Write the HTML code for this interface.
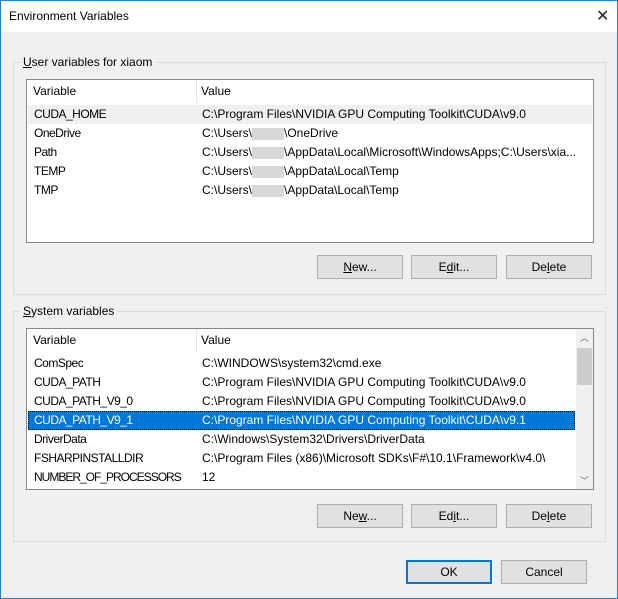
<!DOCTYPE html>
<html><head><style>
*{margin:0;padding:0;box-sizing:border-box}
body{width:618px;height:599px;overflow:hidden;font-family:"Liberation Sans",sans-serif;font-size:12px;color:#000;background:#f0f0f0;position:relative}
.win{position:absolute;left:0;top:0;width:618px;height:599px;border:1px solid #1883d7;background:#f0f0f0}
.title{position:absolute;left:0;top:0;width:616px;height:31px;background:#fff}
.title span{position:absolute;left:8px;top:8px}
.x{position:absolute;left:595px;top:5px;font-size:16px;font-weight:300;color:#222}
.a{position:absolute}
.grp{position:absolute;border:1px solid #dcdcdc}
.lbl{position:absolute;background:#f0f0f0;padding:0 3px}
.lv{position:absolute;border:1px solid #828790;background:#fff}
.hd{position:absolute;top:0;height:23px;line-height:22px;left:0;right:0}
.hd .sep{position:absolute;left:169px;top:0;width:1px;height:23px;background:#e5e5e5}
.row{position:absolute;left:1px;height:19px;line-height:19px;white-space:nowrap}
.c1{position:absolute;left:6px;letter-spacing:-0.5px}
.c2{position:absolute;left:174px}
.btn{position:absolute;width:86px;height:24px;background:#e1e1e1;border:1px solid #adadad;text-align:center;line-height:22px}
.blur{display:inline-block;width:32px;height:12px;background:#d8d8d8;vertical-align:middle}
</style></head><body>
<div class="win">
<div class="title"><span>Environment Variables</span><div class="x">✕</div></div>

<div class="grp" style="left:12px;top:61px;width:593px;height:233px"></div>
<div class="lbl" style="left:19px;top:54px"><u>U</u>ser variables for xiaom</div>
<div class="lv" style="left:25px;top:78px;width:568px;height:164px">
 <div class="hd"><span class="c1" style="letter-spacing:0">Variable</span><div class="sep"></div><span class="c2">Value</span></div>
 <div class="row" style="top:25px;width:564px;background:#f0f0f0"><span class="c1">CUDA_HOME</span><span class="c2">C:\Program Files\NVIDIA GPU Computing Toolkit\CUDA\v9.0</span></div>
 <div class="row" style="top:44px"><span class="c1">OneDrive</span><span class="c2">C:\Users\<span class="blur"></span>\OneDrive</span></div>
 <div class="row" style="top:63px"><span class="c1">Path</span><span class="c2">C:\Users\<span class="blur"></span>\AppData\Local\Microsoft\WindowsApps;C:\Users\xia...</span></div>
 <div class="row" style="top:82px"><span class="c1">TEMP</span><span class="c2">C:\Users\<span class="blur"></span>\AppData\Local\Temp</span></div>
 <div class="row" style="top:101px"><span class="c1">TMP</span><span class="c2">C:\Users\<span class="blur"></span>\AppData\Local\Temp</span></div>
</div>
<div class="btn" style="left:316px;top:254px"><u>N</u>ew...</div>
<div class="btn" style="left:410px;top:254px">E<u>d</u>it...</div>
<div class="btn" style="left:505px;top:254px">De<u>l</u>ete</div>

<div class="grp" style="left:12px;top:310px;width:593px;height:231px"></div>
<div class="lbl" style="left:19px;top:303px"><u>S</u>ystem variables</div>
<div class="lv" style="left:25px;top:327px;width:568px;height:162px">
 <div class="hd" style="right:18px"><span class="c1" style="letter-spacing:0">Variable</span><div class="sep"></div><span class="c2">Value</span></div>
 <div class="row" style="top:25px"><span class="c1">ComSpec</span><span class="c2">C:\WINDOWS\system32\cmd.exe</span></div>
 <div class="row" style="top:44px"><span class="c1">CUDA_PATH</span><span class="c2">C:\Program Files\NVIDIA GPU Computing Toolkit\CUDA\v9.0</span></div>
 <div class="row" style="top:63px"><span class="c1">CUDA_PATH_V9_0</span><span class="c2">C:\Program Files\NVIDIA GPU Computing Toolkit\CUDA\v9.0</span></div>
 <div class="row" style="top:82px;width:547px;background:#0078d7;color:#fff;outline:1px dotted #000;outline-offset:-1px"><span class="c1">CUDA_PATH_V9_1</span><span class="c2">C:\Program Files\NVIDIA GPU Computing Toolkit\CUDA\v9.1</span></div>
 <div class="row" style="top:101px"><span class="c1">DriverData</span><span class="c2">C:\Windows\System32\Drivers\DriverData</span></div>
 <div class="row" style="top:120px"><span class="c1">FSHARPINSTALLDIR</span><span class="c2">C:\Program Files (x86)\Microsoft SDKs\F#\10.1\Framework\v4.0\</span></div>
 <div class="row" style="top:139px"><span class="c1" style="letter-spacing:-1px">NUMBER_OF_PROCESSORS</span><span class="c2">12</span></div>
 <div class="a" style="left:549px;top:0;width:17px;height:160px;background:#f0f0f0">
  <div class="a" style="left:4px;top:2px;font-size:9px;color:#606060">︿</div>
  <div class="a" style="left:1px;top:19px;width:15px;height:37px;background:#cdcdcd"></div>
  <div class="a" style="left:4px;top:145px;font-size:9px;color:#606060">﹀</div>
 </div>
</div>
<div class="btn" style="left:316px;top:503px">Ne<u>w</u>...</div>
<div class="btn" style="left:410px;top:503px">Ed<u>i</u>t...</div>
<div class="btn" style="left:505px;top:503px">De<u>l</u>ete</div>

<div class="btn" style="left:405px;top:559px;border:2px solid #0078d7;line-height:20px">OK</div>
<div class="btn" style="left:500px;top:559px">Cancel</div>
</div>
</body></html>
